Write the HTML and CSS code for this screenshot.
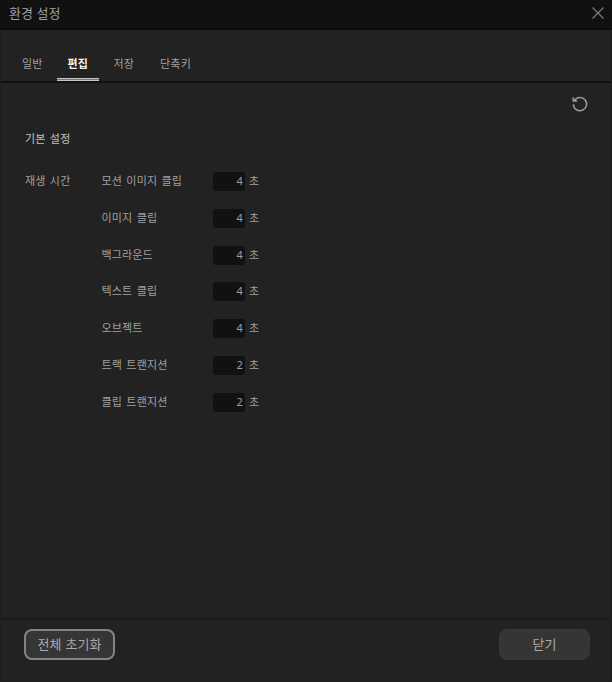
FILE: index.html
```html
<!DOCTYPE html>
<html lang="ko">
<head>
<meta charset="utf-8">
<title>환경 설정</title>
<link rel="stylesheet" href="styles.css">
</head>
<body>
<div class="dialog">
  <header class="titlebar">
    <span>환경 설정</span>
    <svg class="close" width="14" height="14" viewBox="0 0 14 14"><path d="M1.5 1.5L12.5 12.5M12.5 1.5L1.5 12.5"/></svg>
  </header>
  <nav class="tabs">
    <span class="tab">일반</span>
    <span class="tab active">편집</span>
    <span class="tab">저장</span>
    <span class="tab">단축키</span>
  </nav>
  <main class="content">
    <div class="tools">
      <svg class="reset" width="18" height="18" viewBox="0 0 18 18"><path d="M3.4 5.6A6.6 6.6 0 1 1 2.4 9.2M2.3 2.3V5.9H6.2"/></svg>
    </div>
    <h2 class="heading">기본 설정</h2>
    <section class="group">
      <div class="group-name">재생 시간</div>
      <div class="rows">
        <div class="row"><span class="label">모션 이미지 클립</span><span class="field">4</span><span>초</span></div>
        <div class="row"><span class="label">이미지 클립</span><span class="field">4</span><span>초</span></div>
        <div class="row"><span class="label">백그라운드</span><span class="field">4</span><span>초</span></div>
        <div class="row"><span class="label">텍스트 클립</span><span class="field">4</span><span>초</span></div>
        <div class="row"><span class="label">오브젝트</span><span class="field">4</span><span>초</span></div>
        <div class="row"><span class="label">트랙 트랜지션</span><span class="field">2</span><span>초</span></div>
        <div class="row"><span class="label">클립 트랜지션</span><span class="field">2</span><span>초</span></div>
      </div>
    </section>
  </main>
  <footer class="footer">
    <button class="button focused">전체 초기화</button>
    <button class="button">닫기</button>
  </footer>
</div>
</body>
</html>
```
FILE: styles.css
```css
* { box-sizing: border-box; }
body {
  margin: 0;
  background: #222;
  color: #a0a0a0;
  font-family: "Noto Sans CJK KR", sans-serif;
  font-size: 11px;
  line-height: 18px;
  letter-spacing: 0.15px;
  word-spacing: 1.1px;
  white-space: nowrap;
}
.dialog {
  display: flex;
  flex-direction: column;
  height: 682px;
  border: 1px solid #1d1d1d;
  border-top: 0;
}
.titlebar {
  display: flex;
  justify-content: space-between;
  height: 30px;
  margin: 0 -1px;
  padding: 5px 7px 0 9px;
  background: #111;
  border-bottom: 2px solid #0d0d0d;
  font-size: 13px;
  line-height: 16px;
  letter-spacing: 0;
  word-spacing: 0;
}
.close { margin-top: 0.5px; fill: none; stroke: #808080; stroke-width: 1.1; }
.tabs {
  display: flex;
  height: 53px;
  padding: 24px 0 0 11px;
  border-bottom: 2px solid #101010;
}
.tab {
  height: 27px;
  padding: 0 10px;
  margin-right: 6px;
  line-height: 18px;
}
.tab:first-child { margin-right: 4px; }
.tab.active {
  width: 42px;
  padding: 0 11px;
  margin-right: 5px;
  border-bottom: 3px double #c4c4c4;
  background: linear-gradient(#777, #777) 0 100% / 100% 2px no-repeat border-box;
  color: #f0f0f0;
  font-weight: 700;
}
.content { flex: 1; padding: 12px 22px 0 24px; }
.tools { display: flex; justify-content: flex-end; height: 18px; }
.reset { fill: none; stroke: #9c9c9c; stroke-width: 1.5; }
.heading {
  margin: 16px 0 24px;
  color: #aaa;
  font-size: 11px;
  font-weight: 500;
}
.group { display: flex; }
.group-name { width: 76px; }
.rows { display: grid; grid-auto-rows: 36.8px; }
.row { display: flex; align-items: flex-start; }
.label { width: 112px; padding-left: 0.5px; }
.field {
  width: 32px;
  height: 19px;
  margin: 1px 4px 0 0;
  padding: 0 2px;
  border-radius: 3px;
  background: #111;
  font-family: "Noto Sans", sans-serif;
  line-height: 18px;
  text-align: right;
}
.footer {
  display: flex;
  justify-content: space-between;
  height: 63px;
  padding: 9px 21px 0 23px;
  border-top: 2px solid #1a1a1a;
}
.button {
  width: 91px;
  height: 31px;
  padding: 0 0 2px;
  border: 1px solid #383838;
  border-radius: 8px;
  background: #353535;
  color: #aaa;
  font: inherit;
  font-size: 13px;
  letter-spacing: 0;
  word-spacing: 0.5px;
}
.button.focused { border: 2px solid #848484; }
```
